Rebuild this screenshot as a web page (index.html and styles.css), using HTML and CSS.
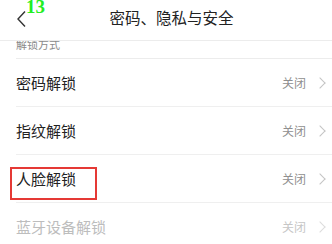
FILE: index.html
```html
<!DOCTYPE html>
<html lang="zh">
<head>
<meta charset="utf-8">
<link rel="stylesheet" href="styles.css">
</head>
<body>
<div class="page">
  <header class="topbar">
    <span class="back">
      <svg width="12" height="18" viewBox="0 0 12 18"><polyline points="9,1.5 2,9 9,16.5" fill="none" stroke="#333" stroke-width="1.4"/></svg>
    </span>
    <span class="mark">13</span>
    <h1 class="title">密码、隐私与安全</h1>
  </header>
  <div class="section-label"><span>解锁方式</span></div>
  <ul class="list">
    <li class="row"><span class="name">密码解锁</span><span class="value">关闭</span><span class="arrow"></span></li>
    <li class="row"><span class="name">指纹解锁</span><span class="value">关闭</span><span class="arrow"></span></li>
    <li class="row highlighted"><span class="name">人脸解锁</span><span class="value">关闭</span><span class="arrow"></span><span class="redbox"></span></li>
    <li class="row disabled"><span class="name">蓝牙设备解锁</span><span class="value">关闭</span><span class="arrow"></span></li>
  </ul>
</div>
</body>
</html>
```
FILE: styles.css
```css
* { box-sizing: border-box; }
html, body { margin: 0; padding: 0; background: #fff; }
body { font-family: "Noto Sans CJK SC", "Noto Sans", sans-serif; overflow: hidden; }
.page { width: 332px; height: 244px; overflow: hidden; }
.topbar {
  position: relative;
  height: 41px;
  border-bottom: 1px solid #ececec;
  display: flex;
  align-items: center;
  padding: 0 0 0 16px;
}
.back { width: 12px; height: 18px; display: block; margin-top: -3px; }
.back svg { display: block; }
.mark {
  position: absolute;
  left: 26px;
  top: -3px;
  font-family: "Liberation Serif", serif;
  font-weight: bold;
  font-size: 19px;
  line-height: 20px;
  color: #22ee22;
}
.title {
  margin: -6px 0 0 0;
  flex: 1;
  text-align: center;
  padding-left: 27px;
  padding-right: 44px;
  font-size: 15.5px;
  font-weight: normal;
  color: #222;
}
.section-label {
  height: 18px;
  overflow: hidden;
  margin-left: 16px;
  border-bottom: 1px solid #ececec;
}
.section-label span {
  display: block;
  margin-top: -4px;
  font-size: 11px;
  line-height: 14px;
  color: #8a8a8a;
}
.list { list-style: none; margin: 0; padding: 0; }
.row {
  position: relative;
  height: 48px;
  margin-left: 16px;
  border-bottom: 1px solid #efefef;
  display: flex;
  align-items: center;
  padding-right: 4px;
}
.name { flex: 1; font-size: 15px; color: #222; }
.value { font-size: 12px; color: #8f8f8f; margin-right: 10px; }
.arrow {
  width: 8px; height: 8px;
  border-top: 1px solid #c4c4c4;
  border-right: 1px solid #c4c4c4;
  transform: rotate(45deg);
  margin-right: 4px;
}
.disabled .name { color: #bdbdbd; }
.disabled .value { color: #c6c6c6; }
.disabled .arrow { border-color: #dcdcdc; }
.redbox {
  position: absolute;
  left: -6px;
  top: 12px;
  width: 87px;
  height: 33px;
  border: 2px solid #e53935;
}
```
